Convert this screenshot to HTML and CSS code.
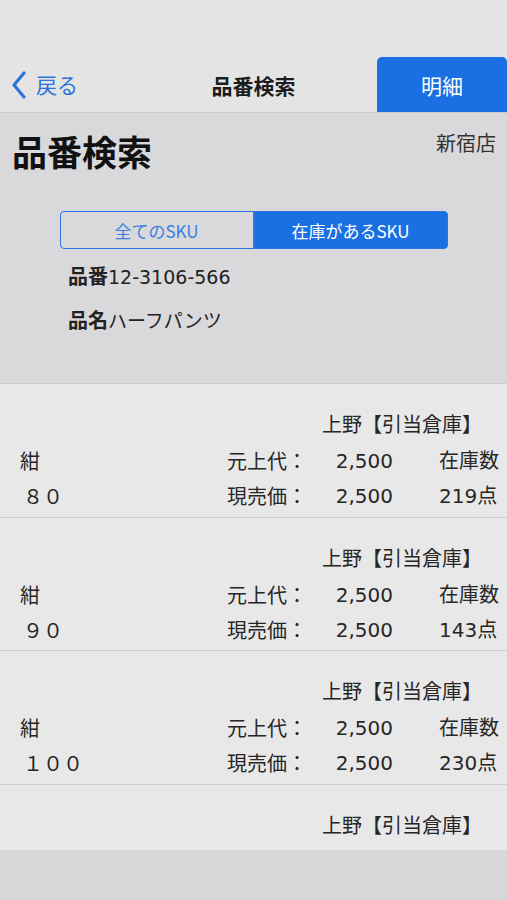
FILE: index.html
```html
<!DOCTYPE html>
<html lang="ja">
<head>
    <meta charset="UTF-8">
    <title>品番検索</title>
    <link rel="stylesheet" href="styles.css">
</head>
<body>
    <div class="status-bar"></div>

    <!--ナビゲーションバー-->
    <div class="nav-bar">
        <a class="nav-back">
            <svg class="chevron" width="18" height="28" viewBox="0 0 18 28">
                <path d="M14 2 L4 14 L14 26" fill="none" stroke="#2b74d9" stroke-width="3.2" stroke-linecap="round" stroke-linejoin="round"/>
            </svg>
            <span>戻る</span>
        </a>
        <div class="nav-title">品番検索</div>
        <div class="nav-detail">明細</div>
    </div>

    <!--検索条件-->
    <div class="search-head">
        <div class="title-row">
            <h1>品番検索</h1>
            <span class="store">新宿店</span>
        </div>
        <div class="segment">
            <div class="seg-item">全てのSKU</div>
            <div class="seg-item active">在庫があるSKU</div>
        </div>
        <p class="info"><b>品番</b>12-3106-566</p>
        <p class="info"><b>品名</b>ハーフパンツ</p>
    </div>

    <!--SKU一覧-->
    <ul class="sku-list">
        <li class="sku-row">
            <div class="warehouse">上野【引当倉庫】</div>
            <span>紺</span><span>元上代：</span><span class="num">2,500</span><span class="stock">在庫数</span>
            <span class="size">８０</span><span>現売価：</span><span class="num">2,500</span><span class="stock">219点</span>
        </li>
        <li class="sku-row">
            <div class="warehouse">上野【引当倉庫】</div>
            <span>紺</span><span>元上代：</span><span class="num">2,500</span><span class="stock">在庫数</span>
            <span class="size">９０</span><span>現売価：</span><span class="num">2,500</span><span class="stock">143点</span>
        </li>
        <li class="sku-row">
            <div class="warehouse">上野【引当倉庫】</div>
            <span>紺</span><span>元上代：</span><span class="num">2,500</span><span class="stock">在庫数</span>
            <span class="size">１００</span><span>現売価：</span><span class="num">2,500</span><span class="stock">230点</span>
        </li>
        <li class="sku-row">
            <div class="warehouse">上野【引当倉庫】</div>
        </li>
    </ul>
</body>
</html>
```

FILE: styles.css
```css
* {
    margin: 0;
    padding: 0;
    box-sizing: border-box;
}
body {
    width: 507px;
    height: 900px;
    overflow: hidden;
    font-family: "DejaVu Sans", "Noto Sans CJK JP", sans-serif;
    color: #222;
    background-color: #d8d8db;
}
ul, li {
    list-style: none;
}
.status-bar {
    height: 57px;
    background-color: #e4e4e5;
}
.nav-bar {
    height: 56px;
    display: flex;
    align-items: stretch;
    background-color: #e4e4e5;
    border-bottom: 1px solid #c9c9cc;
    font-family: "Noto Sans CJK JP", sans-serif;
}
.nav-back {
    width: 130px;
    display: flex;
    align-items: center;
    gap: 8px;
    padding-left: 10px;
    color: #2b74d9;
    font-size: 21px;
}
.nav-back span {
    margin-top: -1px;
}
.nav-title {
    flex: 1;
    display: flex;
    align-items: center;
    justify-content: center;
    font-size: 21px;
    font-weight: bold;
    color: #1c1c1c;
}
.nav-detail {
    width: 130px;
    display: flex;
    align-items: center;
    justify-content: center;
    background-color: #1a6fe3;
    border-radius: 5px 5px 0 0;
    color: #fff;
    font-size: 21px;
}
.search-head {
    height: 271px;
    background-color: #d9d9dc;
    border-bottom: 1px solid #ccccd0;
    padding: 17px 11px 0 11px;
}
.title-row {
    display: flex;
    justify-content: space-between;
    align-items: flex-start;
}
.title-row h1 {
    padding-left: 1px;
    font-family: "Noto Sans CJK JP", sans-serif;
    font-size: 35px;
    line-height: 42px;
    font-weight: bold;
    color: #111;
}
.store {
    font-family: "Noto Sans CJK JP", sans-serif;
    font-size: 20px;
    line-height: 26px;
    color: #333;
}
.segment {
    width: 388px;
    height: 38px;
    margin: 39px auto 0;
    display: flex;
    font-family: "Noto Sans CJK JP", sans-serif;
    font-size: 17px;
}
.seg-item {
    flex: 1;
    display: flex;
    align-items: center;
    justify-content: center;
    border: 1px solid #2a73e0;
    border-radius: 4px 0 0 4px;
    color: #3c7fe0;
}
.seg-item.active {
    background-color: #1a6fe3;
    color: #fff;
    border-radius: 0 4px 4px 0;
}
.info {
    margin-left: 57px;
    font-size: 19px;
    line-height: 28px;
    color: #222;
}
.info:first-of-type {
    margin-top: 13px;
}
.info + .info {
    margin-top: 15px;
}
.info b {
    font-family: "Noto Sans CJK JP", sans-serif;
    font-size: 20px;
}
.sku-list {
    height: 466px;
    overflow: hidden;
    background-color: #e8e8e8;
}
.sku-row {
    height: 133.5px;
    display: grid;
    grid-template-columns: 207px 95px 71px 1fr;
    row-gap: 9px;
    align-content: start;
    padding: 27px 0 0 20px;
    border-bottom: 1px solid #d0d0d2;
    font-size: 20px;
    line-height: 26px;
    color: #262626;
}
.warehouse {
    grid-column: 3 / 5;
    margin-bottom: 2px;
    font-family: "Noto Sans CJK JP", sans-serif;
}
.sku-row span {
    font-family: "Noto Sans CJK JP", sans-serif;
}
.sku-row span.num,
.sku-row span.stock {
    font-family: "DejaVu Sans", "Noto Sans CJK JP", sans-serif;
}
.sku-row .size {
    padding-left: 3px;
}
.num {
    text-align: right;
}
.stock {
    padding-left: 46px;
}
```
